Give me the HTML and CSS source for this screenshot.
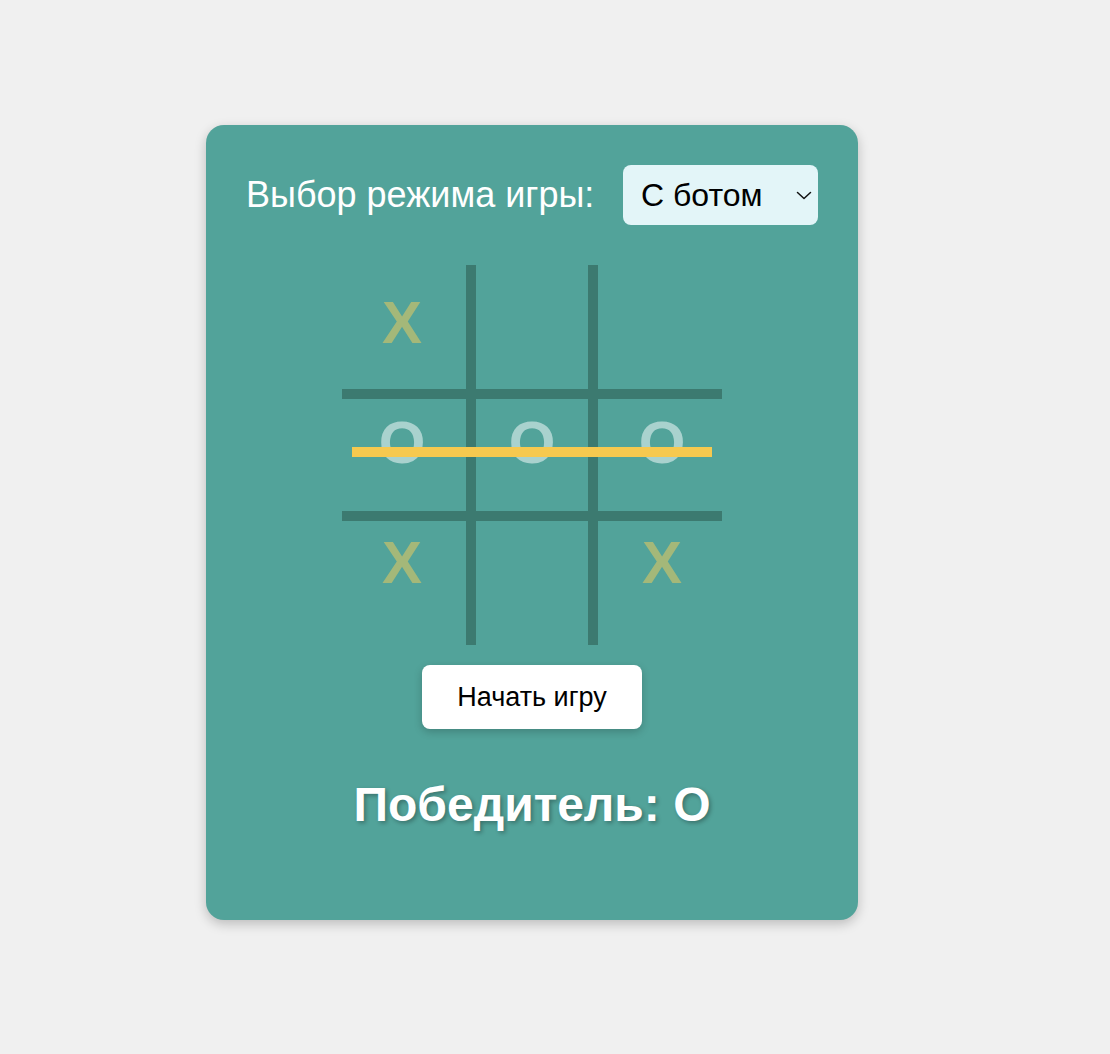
FILE: index.html
```html
<!DOCTYPE html>
<html lang="ru">
<head>
<meta charset="utf-8">
<title>Крестики-нолики</title>
<link rel="stylesheet" href="styles.css">
</head>
<body>
  <div class="card">
    <div class="mode-row">
      <label class="mode-label" for="mode">Выбор режима игры:</label>
      <div class="select-wrap">
        <select id="mode" class="mode-select">
          <option>С ботом</option>
          <option>Вдвоём</option>
        </select>
        <svg class="chevron" width="16" height="9" viewBox="0 0 16 9"><path d="M1.5 1.5 L8 7.5 L14.5 1.5" fill="none" stroke="#111" stroke-width="1.5" stroke-linecap="round" stroke-linejoin="round"/></svg>
      </div>
    </div>

    <div class="board">
      <div class="cells">
        <div class="cell x">X</div>
        <div class="cell"></div>
        <div class="cell"></div>
        <div class="cell o">O</div>
        <div class="cell o">O</div>
        <div class="cell o">O</div>
        <div class="cell x">X</div>
        <div class="cell"></div>
        <div class="cell x">X</div>
      </div>
      <div class="line v v1"></div>
      <div class="line v v2"></div>
      <div class="line h h1"></div>
      <div class="line h h2"></div>
      <div class="win-line"></div>
    </div>

    <button class="start-btn">Начать игру</button>

    <h2 class="winner">Победитель: O</h2>
  </div>
</body>
</html>
```

FILE: styles.css
```css
html, body {
  margin: 0;
  background: #f0f0f0;
}

body {
  padding: 125px 0 0 206px;
  min-height: 1054px;
  box-sizing: border-box;
  font-family: "Liberation Sans", Arial, Helvetica, sans-serif;
}

.card {
  width: 652px;
  box-sizing: border-box;
  padding: 40px 40px 40px;
  background: #52a39a;
  border-radius: 18px;
  box-shadow: 0 4px 12px rgba(0, 0, 0, 0.22);
  display: flex;
  flex-direction: column;
  align-items: center;
}

.mode-row {
  width: 100%;
  display: flex;
  justify-content: space-between;
  align-items: center;
}

.mode-label {
  color: #ffffff;
  font-size: 36px;
}

.select-wrap {
  position: relative;
  width: 195px;
  height: 60px;
}

.mode-select {
  appearance: none;
  -webkit-appearance: none;
  width: 195px;
  height: 60px;
  box-sizing: border-box;
  border: none;
  border-radius: 8px;
  background: #e3f5f8;
  color: #000;
  font-family: "Liberation Sans", Arial, Helvetica, sans-serif;
  font-size: 32px;
  padding: 0 0 0 18px;
  outline: none;
}

.chevron {
  position: absolute;
  right: 6px;
  top: 26px;
  pointer-events: none;
}

.board {
  position: relative;
  width: 380px;
  height: 380px;
  margin-top: 40px;
}

.cells {
  display: grid;
  grid-template-columns: repeat(3, 120px);
  grid-template-rows: repeat(3, 120px);
  column-gap: 10px;
}

.cell {
  display: flex;
  align-items: center;
  justify-content: center;
  font-size: 60px;
  font-weight: bold;
  line-height: 116px;
  height: 116px;
}

.cell.x {
  color: #a4b879;
}

.cell.o {
  color: #a9d2ce;
}

.line {
  position: absolute;
  background: #3c7a70;
}

.line.v {
  top: 0;
  width: 10px;
  height: 380px;
}

.line.v1 { left: 124px; }
.line.v2 { left: 246px; }

.line.h {
  left: 0;
  height: 10px;
  width: 380px;
}

.line.h1 { top: 124px; }
.line.h2 { top: 246px; }

.win-line {
  position: absolute;
  left: 10px;
  top: 182px;
  width: 360px;
  height: 10px;
  background: #f6c94f;
}

.start-btn {
  margin-top: 20px;
  width: 220px;
  height: 64px;
  border: none;
  border-radius: 8px;
  background: #ffffff;
  color: #000;
  font-family: "Liberation Sans", Arial, Helvetica, sans-serif;
  font-size: 27px;
  box-shadow: 0 3px 8px rgba(0, 0, 0, 0.2);
  cursor: pointer;
}

.winner {
  margin: 48px 0 48px;
  color: #ffffff;
  font-size: 48px;
  font-weight: bold;
  text-shadow: 2px 2px 4px rgba(0, 0, 0, 0.3);
}
```
